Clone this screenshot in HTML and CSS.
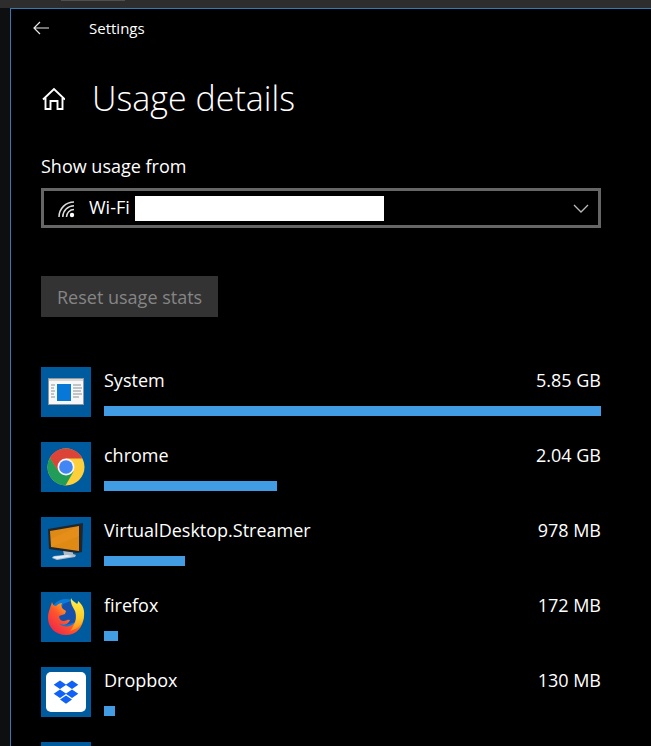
FILE: index.html
```html
<!DOCTYPE html>
<html lang="en">
<head>
    <meta charset="utf-8">
    <title>Settings - Usage details</title>
    <link rel="stylesheet" href="styles.css">
</head>

<body>
    <div class="desktop-strip"><div class="tab-mark"></div></div>
    <div class="window">
        <header class="titlebar">
            <button class="back" type="button" aria-label="Back">
                <svg width="16" height="14" viewBox="0 0 16 14" fill="none" stroke="#e8e8e8" stroke-width="1.2">
                    <path d="M7 1L1 7l6 6M1 7h15"/>
                </svg>
            </button>
            <span>Settings</span>
        </header>

        <main class="content">
            <div class="heading">
                <a class="home" href="#" aria-label="Home">
                    <svg width="24" height="24" viewBox="0 0 24 24" fill="none" stroke="#fff" stroke-width="1.9">
                        <path d="M2 13.500L13 3l11 10.500M4.500 12v11h5v-8h7v8h5V12"/>
                    </svg>
                </a>
                <h1>Usage details</h1>
            </div>

            <label class="field-label" for="network">Show usage from</label>
            <div class="picker">
                <select id="network">
                    <option>Wi-Fi</option>
                </select>
                <svg class="wifi" width="17" height="17" viewBox="0 0 17 17" fill="none" stroke="#ddd" stroke-width="1.5">
                    <path d="M1 16A15 15 0 0 1 16 1M4.800 16A11.200 11.200 0 0 1 16 4.800M8.500 16a7.500 7.500 0 0 1 7.500-7.500"/>
                    <circle cx="14" cy="14" r="2.200" fill="#fff" stroke="none"/>
                </svg>
                <span class="redacted"></span>
                <svg class="chevron" width="16" height="10" viewBox="0 0 16 10" fill="none" stroke="#bbb" stroke-width="1.3">
                    <path d="M1 1l7 7 7-7"/>
                </svg>
            </div>

            <button class="reset" type="button" disabled>Reset usage stats</button>

            <ul class="apps">
                <li class="app">
                    <div class="tile">
                        <svg width="50" height="50" viewBox="0 0 50 50">
                            <path fill="#8f989e" d="M7 11h36v27H7z"/>
                            <path fill="#f7f7f7" d="M8 14h34v23H8z"/>
                            <path fill="#d6d6d6" d="M8 12h34v2H8z"/>
                            <path fill="#0878d8" d="M16 17h14v17H16z"/>
                            <path stroke="#8d9499" stroke-width="1.2" d="M10 18h4M10 21h3M10 24h4M10 27h3M10 30h4M32 18h8M32 21h9M32 24h8M32 27h9M32 30h6"/>
                        </svg>
                    </div>
                    <div class="usage">
                        <div class="line"><span>System</span><span>5.85 GB</span></div>
                        <div class="bar" style="width: 100%"></div>
                    </div>
                </li>
                <li class="app">
                    <div class="tile">
                        <svg width="50" height="50" viewBox="0 0 50 50">
                            <circle cx="25" cy="25" r="18.500" fill="#fdd03b"/>
                            <path fill="#db4437" d="M25 16.500h16.500A18.500 18.500 0 0 0 9 15.700l8.600 13.500z"/>
                            <path fill="#219d57" d="M9 15.700A18.500 18.500 0 0 0 24.500 43.500l8.100-14.100-15-.2z"/>
                            <path fill="#db4437" d="M9 15.700l8.600 13.500L25 16.500z"/>
                            <circle cx="25" cy="25" r="8.500" fill="#f5f5f5"/>
                            <circle cx="25" cy="25" r="6.800" fill="#4285f4"/>
                        </svg>
                    </div>
                    <div class="usage">
                        <div class="line"><span>chrome</span><span>2.04 GB</span></div>
                        <div class="bar" style="width: 34.8%"></div>
                    </div>
                </li>
                <li class="app">
                    <div class="tile">
                        <svg width="50" height="50" viewBox="0 0 50 50">
                            <path fill="#aebdca" d="M22 33h10v4l3 1-1 2-18 3-5-2 2-2 10-1z"/>
                            <path fill="#e5edf3" d="M11 40l15-2 6 1-16 3z"/>
                            <path fill="#20262b" d="M7 12l35-6-1 29-5 1-28-4z"/>
                            <path fill="#e08a16" d="M9 14l29-5v25L10 30z"/>
                            <path fill="#f29d24" d="M10 22l28-13v10L10 30z" opacity=".3"/>
                        </svg>
                    </div>
                    <div class="usage">
                        <div class="line"><span>VirtualDesktop.Streamer</span><span>978 MB</span></div>
                        <div class="bar" style="width: 16.3%"></div>
                    </div>
                </li>
                <li class="app">
                    <div class="tile">
                        <svg width="50" height="50" viewBox="0 0 50 50">
                            <defs>
                                <linearGradient id="fox" x1="1" y1="0" x2="0" y2="1">
                                    <stop offset="0" stop-color="#ffe43b"/>
                                    <stop offset=".3" stop-color="#ffad1c"/>
                                    <stop offset=".55" stop-color="#ff542c"/>
                                    <stop offset="1" stop-color="#e81855"/>
                                </linearGradient>
                                <linearGradient id="tail" x1="0" y1="0" x2="0" y2="1">
                                    <stop offset="0" stop-color="#fff04a"/>
                                    <stop offset=".6" stop-color="#ffcb28"/>
                                    <stop offset="1" stop-color="#ff8a20"/>
                                </linearGradient>
                            </defs>
                            <circle cx="25" cy="23" r="16" fill="#087bdc"/>
                            <path fill="#1650ad" d="M22 12l8-3 5 8v13l-11 3-6-7z"/>
                            <path fill="url(#fox)" d="M11 10c1 3 2 4 4 4 2-2 4-3 6-3-1 2-1 4 1 6l3 2-1 3-6 2c0 3 2 5 5 5 2 0 3-2 6-1-2 5-7 6-11 3 4 6 15 4 17-3l8-4c-1 12-8 19-18 19C14 43 7 35 7 26c0-6 2-9 4-16z"/>
                            <path fill="url(#tail)" d="M30 6c-1 5 2 9 4 13 2 6 1 13-5 20 8-2 13-7 14-15 1-7-2-12-6-15 0 1 0 2-1 3-2-2-5-3-6-6z"/>
                        </svg>
                    </div>
                    <div class="usage">
                        <div class="line"><span>firefox</span><span>172 MB</span></div>
                        <div class="bar" style="width: 2.8%"></div>
                    </div>
                </li>
                <li class="app">
                    <div class="tile">
                        <svg width="50" height="50" viewBox="0 0 50 50">
                            <rect x="5" y="5" width="40" height="40" rx="5" fill="#fff"/>
                            <path fill="#0f62f5" d="M19 13.500l6.300 4.300-6.300 4.200-6.300-4.200zM31 13.500l6.300 4.300-6.300 4.200-6.300-4.200zM19 22.500l6.300 4.300-6.300 4.200-6.300-4.200zM31 22.500l6.300 4.300-6.300 4.200-6.300-4.200zM25 28.500l6 4-6 4.200-6-4.200z"/>
                        </svg>
                    </div>
                    <div class="usage">
                        <div class="line"><span>Dropbox</span><span>130 MB</span></div>
                        <div class="bar" style="width: 2.2%"></div>
                    </div>
                </li>
                <li class="app">
                    <div class="tile"></div>
                </li>
            </ul>
        </main>
    </div>
</body>

</html>
```
FILE: styles.css
```css
* {
    box-sizing: border-box;
}

body {
    display: flex;
    flex-direction: column;
    height: 100vh;
    margin: 0;
    overflow: hidden;
    background-color: #0e0f10;
    color: #fff;
    font: 18px/24px "Open Sans", sans-serif;
}

.desktop-strip {
    flex: none;
    height: 8px;
    padding-left: 61px;
    background-color: #2d2d2d;
}

.tab-mark {
    width: 64px;
    height: 1px;
    background-color: #505050;
}

.window {
    flex: 1;
    min-height: 0;
    margin-left: 10px;
    overflow: hidden;
    border: solid #3279b5;
    border-width: 1px 0 0 1px;
    background-color: #000;
}

.titlebar {
    display: flex;
    align-items: center;
    height: 38px;
    padding-left: 22px;
    gap: 40px;
    font-size: 15px;
}

button {
    border: 0;
    font: inherit;
}

.back {
    display: flex;
    padding: 0;
    background: none;
}

.content {
    padding: 26px 50px 0 30px;
}

.heading {
    display: flex;
    align-items: center;
    gap: 27px;
    height: 50px;
}

.home {
    display: flex;
}

h1 {
    margin: 0;
    font-size: 34px;
    font-weight: 300;
    line-height: 48px;
}

.field-label {
    display: block;
    margin-top: 31px;
}

.picker {
    position: relative;
    margin-top: 10px;
}

select {
    display: block;
    width: 100%;
    height: 40px;
    padding: 0 45px 2px;
    appearance: none;
    border: 3px solid #666;
    border-radius: 0;
    background-color: #000;
    color: #fff;
    font: inherit;
}

.wifi,
.redacted,
.chevron {
    position: absolute;
    pointer-events: none;
}

.wifi {
    left: 17px;
    top: 13px;
}

.redacted {
    left: 94px;
    top: 8px;
    width: 249px;
    height: 25px;
    background-color: #fff;
}

.chevron {
    right: 12px;
    top: 16px;
}

.reset {
    height: 41px;
    margin-top: 48px;
    padding: 0 16px;
    background-color: #333;
    color: #858585;
}

.apps {
    margin: 50px 0 0;
    padding: 0;
    list-style: none;
}

.app {
    display: flex;
    gap: 13px;
    margin-bottom: 25px;
}

.tile {
    flex: none;
    width: 50px;
    height: 50px;
    background-color: #005a9e;
}

.tile svg {
    display: block;
}

.usage {
    flex: 1;
    padding-top: 1px;
}

.line {
    display: flex;
    justify-content: space-between;
}

.bar {
    height: 10px;
    margin-top: 14px;
    background-color: #429ce3;
}
```
